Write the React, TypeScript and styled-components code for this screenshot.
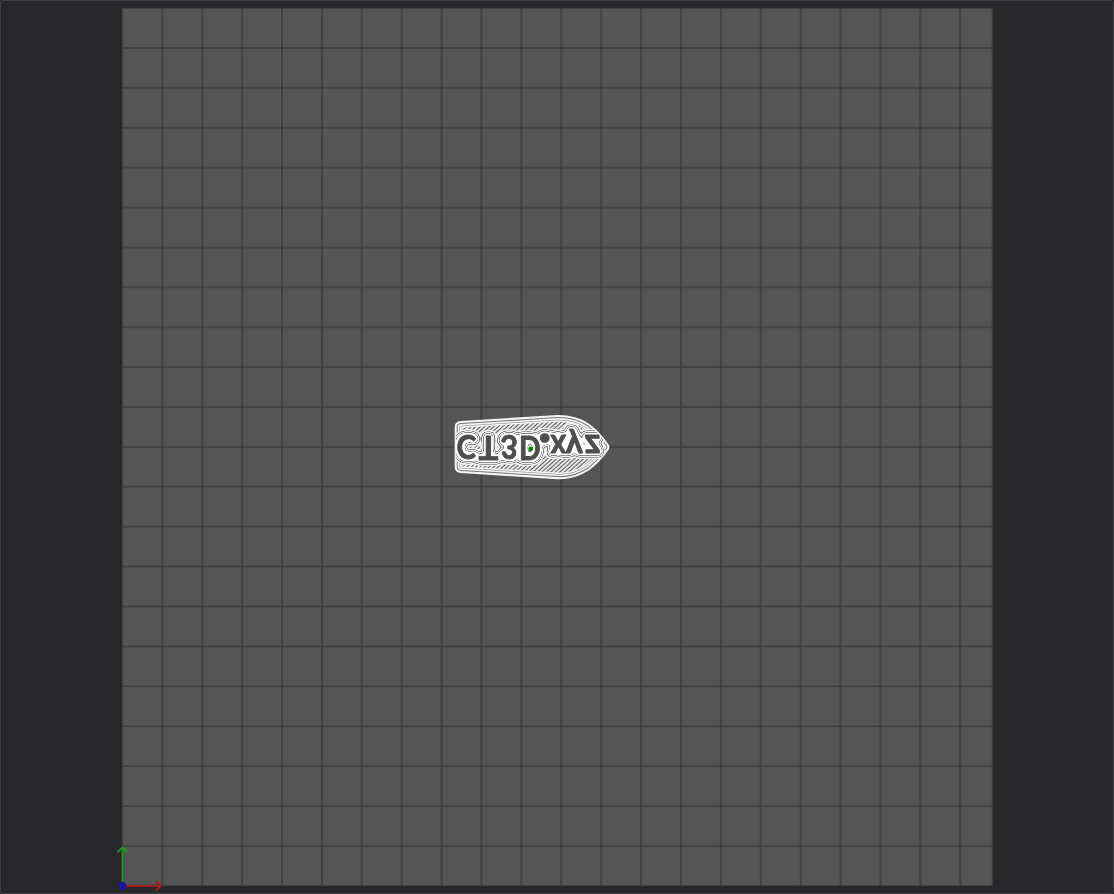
import React from 'react';
import styled, { createGlobalStyle } from 'styled-components';

const GlobalStyle = createGlobalStyle`
  * { box-sizing: border-box; }
  html, body { margin: 0; background: #272729; overflow: hidden; }
`;

const Viewer = styled.main`
  width: 1114px;
  height: 894px;
  border: 1px solid #414143;
  border-radius: 3px;
  background: #272729;
  overflow: hidden;
`;

const Scene = styled.svg`
  display: block;
  margin: -1px;
  width: 1114px;
  height: 894px;
`;

const Glyph = styled.text`
  font-family: Lato, 'Liberation Sans', sans-serif;
  font-weight: 700;
  font-size: 33px;
  fill: #4e4e4e;
  stroke: #4e4e4e;
  stroke-width: 0.9px;
  stroke-linejoin: round;
`;

const PITCH = 39.9;
const LEFT = 122.4;
const RIGHT = 992.2;
const TOP = 8.4;
const BOTTOM = 885.8;

const columns = Array.from({ length: 22 }, (_, i) => LEFT + i * PITCH);
const rows = Array.from({ length: 22 }, (_, i) => BOTTOM - i * PITCH);

const HULL =
  'M455.4 427 Q455.4 422.2 461 421.8 L553 416 Q574 414.5 589 424.5 Q600 433 608 445 Q609.4 447 608 449.3 Q600 461 589 469.5 Q574 479.5 557 478.4 L461 472.3 Q455.4 471.8 455.4 467 Z';

type Letter = { char: string; x: number; y: number; sx: number; sy: number };

const letters: Letter[] = [
  { char: 'C', x: 456.4, y: 435, sx: 0.9, sy: 1 },
  { char: 'T', x: 478.4, y: 435.8, sx: 1, sy: 0.97 },
  { char: '3', x: 500.6, y: 435, sx: 0.9, sy: 1 },
  { char: 'D', x: 519, y: 435.6, sx: 0.86, sy: 0.98 },
  { char: '.', x: 538.3, y: 433.5, sx: 1.65, sy: 1.65 },
  { char: 'x', x: 550.4, y: 435.2, sx: 0.9, sy: 1.02 },
  { char: 'y', x: 565.8, y: 435.2, sx: 0.98, sy: 1.02 },
  { char: 'z', x: 584.6, y: 435.2, sx: 1.05, sy: 1.02 },
];

// Brightness of the perimeter passes, from the outermost ring (0) to the letter edge (1).
const RINGS = '0.95 0.95 0.95 0.95 0.5 0.5 0.95 0.95 0.95 0.52 0.52 0.95 0.97 1 1 1 1 1 1 1 1';

export default function App() {
  return (
    <>
      <GlobalStyle />
      <Viewer>
        <Scene viewBox="0 0 1114 894">
          <defs>
            <clipPath id="hull">
              <path d={HULL} />
            </clipPath>
            <pattern id="infill" width="3" height="3" patternUnits="userSpaceOnUse" patternTransform="rotate(48)">
              <rect width="3" height="3" fill="#606060" />
              <rect width="1.8" height="3" fill="#f4f4f4" />
            </pattern>
            <filter
              id="perimeters"
              filterUnits="userSpaceOnUse"
              x="445"
              y="405"
              width="175"
              height="85"
              colorInterpolationFilters="sRGB"
            >
              <feMorphology in="SourceAlpha" operator="dilate" radius="2" />
              <feGaussianBlur stdDeviation="2.3" />
              <feColorMatrix values="0 0 0 1 0  0 0 0 1 0  0 0 0 1 0  0 0 0 0 1" result="falloff" />
              <feComponentTransfer in="falloff" result="rings">
                <feFuncR type="table" tableValues={RINGS} />
                <feFuncG type="table" tableValues={RINGS} />
                <feFuncB type="table" tableValues={RINGS} />
              </feComponentTransfer>
              <feColorMatrix in="falloff" values="0 0 0 0 0  0 0 0 0 0  0 0 0 0 0  25 0 0 0 -0.9" result="mask" />
              <feComposite in="rings" in2="mask" operator="in" result="contours" />
              <feMerge>
                <feMergeNode in="contours" />
                <feMergeNode in="SourceGraphic" />
              </feMerge>
            </filter>
          </defs>

          <rect x="122" y="8" width="870.5" height="878" fill="#555" />
          <g stroke="#303030" strokeOpacity="0.5" strokeWidth="2">
            {columns.map((x) => (
              <line key={x} x1={x} x2={x} y1={TOP} y2={BOTTOM} />
            ))}
            {rows.map((y) => (
              <line key={y} x1={LEFT} x2={RIGHT} y1={y} y2={y} />
            ))}
            <line x1={RIGHT} x2={RIGHT} y1={TOP} y2={BOTTOM} strokeWidth="1" />
            <line x1={LEFT} x2={RIGHT} y1={TOP} y2={TOP} strokeWidth="1" />
          </g>

          <g clipPath="url(#hull)">
            <path d={HULL} fill="url(#infill)" />
            <g fill="none">
              <path d={HULL} stroke="#f4f4f4" strokeWidth="12" />
              <path d={HULL} stroke="#808080" strokeWidth="9" />
              <path d={HULL} stroke="#f4f4f4" strokeWidth="8" />
              <path d={HULL} stroke="#777" strokeWidth="4.6" />
              <path d={HULL} stroke="#f4f4f4" strokeWidth="2.6" />
            </g>
            <g filter="url(#perimeters)">
              {letters.map((l) => (
                <Glyph key={l.char} transform={`translate(${l.x} ${l.y}) scale(${l.sx} ${-l.sy})`}>
                  {l.char}
                </Glyph>
              ))}
            </g>
          </g>
          <path d={HULL} fill="none" stroke="#f4f4f4" strokeWidth="1.5" />
          <circle cx="530.7" cy="449" r="2.4" fill="#008c00" />

          <g fill="none" strokeWidth="1.8">
            <path d="M122.5 885V848 M117.5 852L122.5 847.5L127.5 852" stroke="#219a24" />
            <path d="M122.5 886H160 M155.5 881L160.5 886L155.5 891" stroke="#a31c1c" />
          </g>
          <circle cx="122.3" cy="885.8" r="4" fill="#171798" />
        </Scene>
      </Viewer>
    </>
  );
}
